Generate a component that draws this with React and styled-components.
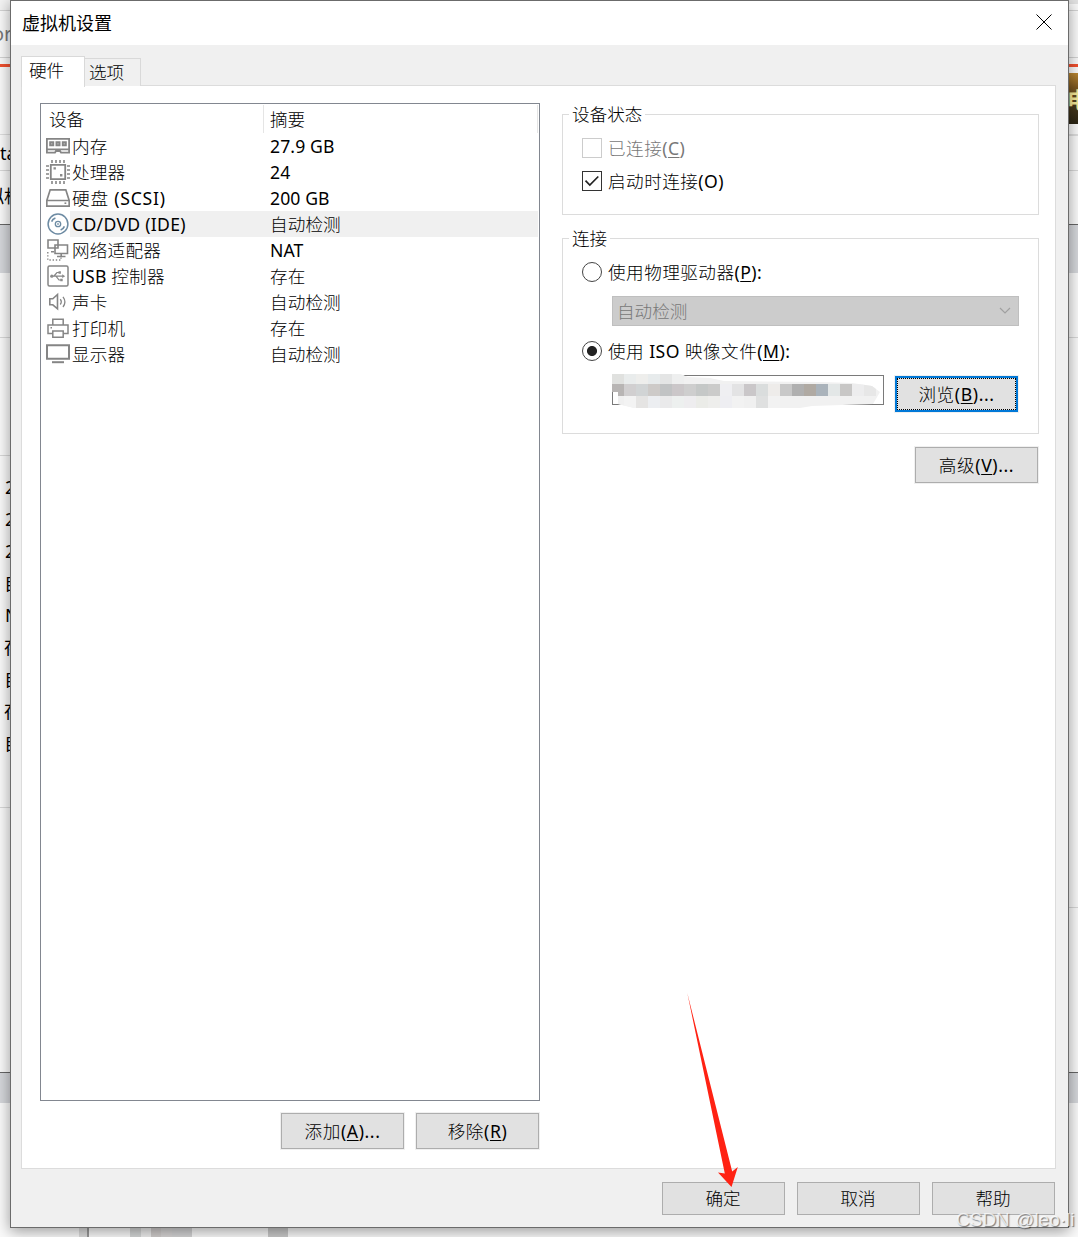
import React from "react";
import styled, { createGlobalStyle } from "styled-components";

const devices = [
  { icon: "memory", name: "内存", summary: "27.9 GB" },
  { icon: "cpu", name: "处理器", summary: "24" },
  { icon: "disk", name: "硬盘 (SCSI)", summary: "200 GB", spacing: 0.8 },
  { icon: "cd", name: "CD/DVD (IDE)", summary: "自动检测", spacing: 0.3, selected: true },
  { icon: "network", name: "网络适配器", summary: "NAT" },
  { icon: "usb", name: "USB 控制器", summary: "存在" },
  { icon: "sound", name: "声卡", summary: "自动检测" },
  { icon: "printer", name: "打印机", summary: "存在" },
  { icon: "display", name: "显示器", summary: "自动检测" }
];

// bands of the window behind the dialog, from top to bottom
const leftBands = [
  { h: 10, bg: "#f3f3f3" },
  { h: 1, bg: "#d3d3d3" },
  { h: 46, text: "or", size: 20, shift: -8, color: "#777" },
  { h: 1, bg: "#d3d3d3" },
  { h: 6 },
  { h: 3, bg: "#f0502f" },
  { h: 67 },
  { h: 1, bg: "#dedede" },
  { h: 35, text: "ta", shift: 0 },
  { h: 1, bg: "#d8d8d8" },
  { h: 50, text: "拟机", shift: -14 },
  { h: 3 },
  { h: 1, bg: "#666" },
  { h: 48, bg: "#d5d7db" },
  { h: 64 },
  { h: 1, bg: "#d8d8d8" },
  { h: 117 },
  { h: 1, bg: "#d8d8d8" },
  { h: 15 },
  { h: 32, text: "27.9 GB", shift: 5 },
  { h: 32, text: "24", shift: 5 },
  { h: 32, text: "200 GB", shift: 5 },
  { h: 32, text: "自动检测", shift: 4 },
  { h: 32, text: "NAT", shift: 5 },
  { h: 32, text: "存在", shift: 4 },
  { h: 32, text: "自动检测", shift: 4 },
  { h: 32, text: "存在", shift: 4 },
  { h: 32, text: "自动检测", shift: 4 },
  { h: 48 },
  { h: 1, bg: "#d8d8d8" },
  { h: 264 },
  { h: 1, bg: "#666" },
  { h: 30, bg: "#d5d7db" },
  { h: 125 }
];

const rightBands = [
  { h: 4, bg: "#e2e2e2" },
  { h: 6 },
  { h: 1, bg: "#d3d3d3" },
  { h: 46 },
  { h: 1, bg: "#d3d3d3" },
  { h: 6 },
  { h: 3, bg: "#f0502f" },
  { h: 6 },
  { h: 51, bg: "linear-gradient(#b98632, #7d5820 28%, #4a3a1c 60%, #2b2515)", text: "电", size: 22, shift: -2, color: "#f5e997", bold: true },
  { h: 10 },
  { h: 2, bg: "#dedede" },
  { h: 34 },
  { h: 1, bg: "#d8d8d8" },
  { h: 53 },
  { h: 1, bg: "#666" },
  { h: 48, bg: "#d5d7db" },
  { h: 64 },
  { h: 1, bg: "#d8d8d8" },
  { h: 569 },
  { h: 1, bg: "#d8d8d8" },
  { h: 164 },
  { h: 1, bg: "#666" },
  { h: 30, bg: "#d5d7db" },
  { h: 125 }
];

const bottomBlocks = [
  { w: 79, bg: "#fafafa" },
  { w: 8, bg: "#dcdcdc" },
  { w: 2, bg: "#999" },
  { w: 41, bg: "#fafafa" },
  { w: 11, bg: "#d4d6d6" },
  { w: 10, bg: "#eeeeee" },
  { w: 10, bg: "#cfcccb" },
  { w: 11, bg: "#d6d4d4" },
  { w: 20, bg: "#d3d3d4" },
  { w: 76, bg: "#fafafa" },
  { w: 20, bg: "#c9c9c9" }
];

const topRow = "#e0e1df #e9ecec #eeeeec #e7ebec #e4e5e5 #eeefef".split(" ");
const midRow = "#b8b5b4 #d1cfd0 #d1d4d5 #cdcac8 #c1c3c4 #cbc7c9 #cecece #c5c8c7 #cbcbca #efeff2 #e3e3e4 #cac7c9 #dadddd #eeecea #c8c8c8 #b0b0b0 #b0aaa3 #aab3bb #e3e7e7 #c8c7c6 #ededee #e7e7e7".split(" ");
const lowRow = "#f0f0f0 #f3f3f3 #e5e4e3 #eceef1 #eaeaeb #edf0ef #eeedef #ebece8 #eeeeec #eeeef2 #f2f2f2 #f0f0f0 #dfe0e0 #f2f2f2".split(" ");

function DeviceIcon({ type }) {
  return (
    <Icon viewBox="0 0 24 26">
      {type === "memory" && (
        <>
          <path d="M.9 5.9H23.1V19.6H15L14 18H10L9 19.6H.9Z M1 16.4H23" strokeWidth="1.8" />
          <path d="M4.1 9.2h3.2v3.2h-3.2zM10.4 9.2h3.2v3.2h-3.2zM16.7 9.2h3.2v3.2h-3.2z" fill="#aaa" strokeWidth="1.8" />
        </>
      )}
      {type === "cpu" && (
        <>
          <path d="M4.8 5.8H19.2V20.2H4.8Z" strokeWidth="1.8" />
          <path d="M6 1v3M10 1v3M14 1v3M18 1v3M6 22v3M10 22v3M14 22v3M18 22v3M0 7h3M0 11h3M0 15h3M0 19h3M21 7h3M21 11h3M21 15h3M21 19h3" strokeWidth="1.6" />
          <path d="M7.5 8.2h2.4v2.4H7.5zM14 15h2.4v2.4H14z" fill="#8b8b8b" stroke="none" />
        </>
      )}
      {type === "disk" && (
        <>
          <path d="M4.2 4.8H19.8L23.2 15.5V21.2H.8V15.5Z M.8 15.5H23.2" strokeWidth="1.7" />
          <path d="M18.5 18.2h1.8" strokeWidth="1.6" />
        </>
      )}
      {type === "cd" && (
        <g stroke="#6d8ba3">
          <circle cx="12" cy="13" r="9.9" strokeWidth="1.5" />
          <circle cx="12" cy="13" r="2.7" strokeWidth="1.3" />
          <circle cx="12" cy="13" r=".5" />
          <path d="M5.6 10.6Q6.6 8 9.4 7M18.4 15.4Q17.4 18 14.6 19" strokeWidth="1.6" />
        </g>
      )}
      {type === "network" && (
        <>
          <path d="M2 3H12V11H2ZM9 8H21.5V16.5H9Z" fill="#fff" strokeWidth="1.6" />
          <path d="M5 14.8H8M15.2 16.5V19M11 19.5H19.5" strokeWidth="1.6" />
          <path d="M1.8 15V23H15V19" strokeWidth="1.4" strokeDasharray="1.4 1.8" />
        </>
      )}
      {type === "usb" && (
        <>
          <rect x="2" y="3" width="20" height="20" rx="1.5" strokeWidth="1.5" />
          <path d="M5 13.2H17M8 13L11 9.5H13M10 13.2L13 17H15" strokeWidth="1.2" />
          <path d="M16.2 11.3L19.2 13.2L16.2 15.1ZM12.5 8.3h2.4v2.4h-2.4zM14.3 15.8h2.4v2.4h-2.4z" fill="#8b8b8b" stroke="none" />
          <circle cx="5.8" cy="13.2" r="1.6" fill="#8b8b8b" stroke="none" />
        </>
      )}
      {type === "sound" && (
        <>
          <path d="M3.8 9.8H6.8L11.5 5.5V19.8L6.8 15.8H3.8Z" strokeWidth="1.6" />
          <path d="M14.3 10.2Q16.3 12.8 14.3 15.5M17 7.8Q20.8 12.8 17 18" strokeWidth="1.3" />
        </>
      )}
      {type === "printer" && (
        <>
          <path d="M6.8 10V4.2H17.2V10M6.8 18.5H2V10H22V18.5H17.2M6.8 16H17.2V22.2H6.8Z" strokeWidth="1.5" />
          <path d="M4.5 12.8H6" strokeWidth="1.4" />
        </>
      )}
      {type === "display" && (
        <>
          <path d="M1 4.2H23V17.8H1Z" strokeWidth="2" />
          <path d="M6 21.2H18" strokeWidth="2" />
        </>
      )}
    </Icon>
  );
}

function Strip({ bands }) {
  return (
    <StripColumn>
      {bands.map((b, i) => (
        <Band key={i} $h={b.h} $bg={b.bg} $shift={b.shift} $color={b.color} $size={b.size} $bold={b.bold}>
          {b.text}
        </Band>
      ))}
    </StripColumn>
  );
}

function Redaction() {
  return (
    <Mosaic viewBox="0 0 272 34">
      <clipPath id="smudge">
        <path d="M0 0H68L76 3L98 4L112 7L210 8L240 9L260 12L268 18L261 30L200 32L188 34H22L14 32L6 30V18H0Z" />
      </clipPath>
      <g clipPath="url(#smudge)">
        <rect width="272" height="34" fill="#f1f1f1" />
        {topRow.map((c, i) => <rect key={i} x={i * 12} y="0" width="12" height="10" fill={c} />)}
        {midRow.map((c, i) => <rect key={i} x={i * 12} y="10" width="12" height="12" fill={c} />)}
        {lowRow.map((c, i) => <rect key={i} x={i * 12} y="22" width="12" height="12" fill={c} />)}
      </g>
    </Mosaic>
  );
}

function App() {
  return (
    <Screen>
      <GlobalStyle />
      <Strip bands={leftBands} />
      <Dialog>
        <TitleBar>
          <Title>虚拟机设置</Title>
          <CloseIcon viewBox="0 0 16 16">
            <path d="M.5 .5L15.5 15.5M15.5 .5L.5 15.5" />
          </CloseIcon>
        </TitleBar>
        <Tabs>
          <Tab $active>硬件</Tab>
          <Tab>选项</Tab>
        </Tabs>
        <Panel>
          <ListColumn>
            <DeviceList>
              <ListHeader>
                <HeaderCell>设备</HeaderCell>
                <HeaderCell>摘要</HeaderCell>
              </ListHeader>
              {devices.map((d) => (
                <DeviceRow key={d.icon}>
                  <DeviceIcon type={d.icon} />
                  <DeviceCells $selected={d.selected}>
                    <DeviceName $spacing={d.spacing}>{d.name}</DeviceName>
                    <Summary>{d.summary}</Summary>
                  </DeviceCells>
                </DeviceRow>
              ))}
            </DeviceList>
            <ListActions>
              <Button>添加(<u>A</u>)...</Button>
              <Button>移除(<u>R</u>)</Button>
            </ListActions>
          </ListColumn>
          <Settings>
            <Group $height={112}>
              <Legend>设备状态</Legend>
              <Option $top={13} $disabled>
                <CheckBox $disabled />
                <span>已连接(<u>C</u>)</span>
              </Option>
              <Option $top={13}>
                <CheckBox>
                  <svg width="18" height="18" viewBox="0 0 18 18">
                    <path d="M2.5 8.7L6.8 13L15.3 4.5" fill="none" stroke="#222" strokeWidth="1.7" />
                  </svg>
                </CheckBox>
                <span>启动时连接(O)</span>
              </Option>
            </Group>
            <Group $height={207} $top={12}>
              <Legend>连接</Legend>
              <Option $top={13}>
                <Radio />
                <span>使用物理驱动器(<u>P</u>):</span>
              </Option>
              <Select>
                自动检测
                <svg width="12" height="8" viewBox="0 0 12 8">
                  <path d="M1 1L6 6L11 1" fill="none" stroke="#a0a0a0" strokeWidth="1.2" />
                </svg>
              </Select>
              <Option $top={15}>
                <Radio $checked />
                <span>使用 ISO 映像文件(<u>M</u>):</span>
              </Option>
              <FileRow>
                <PathField>
                  <Redaction />
                </PathField>
                <Button $focused>浏览(<u>B</u>)...</Button>
              </FileRow>
            </Group>
            <Advanced>
              <Button>高级(<u>V</u>)...</Button>
            </Advanced>
          </Settings>
        </Panel>
        <Footer>
          <Button $short>确定</Button>
          <Button $short>取消</Button>
          <Button $short>帮助</Button>
        </Footer>
      </Dialog>
      <Strip bands={rightBands} />
      <BottomStrip>
        {bottomBlocks.map((b, i) => <Block key={i} $w={b.w} $bg={b.bg} />)}
      </BottomStrip>
      <Arrow viewBox="0 0 60 200">
        <path d="M7.3 3L52.2 181.5L57.8 177L51.5 197L38 182.5L44.8 183.5Z" fill="#ff2213" />
      </Arrow>
      <Watermark>CSDN @leo·li</Watermark>
    </Screen>
  );
}

const GlobalStyle = createGlobalStyle`
  * {
    box-sizing: border-box;
  }
  body {
    margin: 0;
    overflow: hidden;
    font-family: "Noto Sans", "Noto Sans CJK SC Light", "Noto Sans CJK SC", sans-serif;
    font-size: 17.6px;
    line-height: 26px;
    color: #000;
  }
  u {
    text-decoration-thickness: 1px;
    text-underline-offset: 2px;
  }
`;

const Screen = styled.div`
  position: relative;
  display: grid;
  grid-template-columns: 10px 1059px 9px;
  grid-template-rows: 1228px 9px;
  width: 1078px;
  height: 1237px;
  overflow: hidden;
  background-color: #fafafa;
`;

const StripColumn = styled.div`
  height: 1228px;
  overflow: hidden;
  font-family: "Noto Sans", "Noto Sans CJK SC", sans-serif;
`;

const Band = styled.div`
  display: flex;
  align-items: center;
  height: ${(p) => p.$h}px;
  overflow: hidden;
  white-space: nowrap;
  background: ${(p) => p.$bg || "#fafafa"};
  text-indent: ${(p) => p.$shift || 0}px;
  color: ${(p) => p.$color || "#000"};
  font-size: ${(p) => p.$size || 18}px;
  font-weight: ${(p) => (p.$bold ? 700 : 400)};
`;

const BottomStrip = styled.div`
  grid-column: 1 / 4;
  display: flex;
`;

const Block = styled.div`
  width: ${(p) => p.$w}px;
  background-color: ${(p) => p.$bg};
`;

const Dialog = styled.div`
  z-index: 1;
  display: flex;
  flex-direction: column;
  border: 1px solid #6b6b6b;
  background-color: #f0f0f0;
  box-shadow: 0 3px 14px rgba(0,0,0,0.4);
`;

const TitleBar = styled.div`
  display: flex;
  align-items: center;
  justify-content: space-between;
  height: 44px;
  padding: 0 16px 2px 11px;
  background-color: #fff;
`;

const Title = styled.span`
  font-family: "Noto Sans CJK SC", sans-serif;
  font-size: 18px;
`;

const CloseIcon = styled.svg`
  width: 16px;
  height: 16px;
  fill: none;
  stroke: #000;
  stroke-width: 1;
`;

const Tabs = styled.div`
  display: flex;
  align-items: flex-end;
  height: 41px;
  padding: 11px 10px 0;
`;

const Tab = styled.div`
  z-index: 1;
  height: ${(p) => (p.$active ? 31 : 28)}px;
  width: ${(p) => (p.$active ? 64 : 56)}px;
  margin-bottom: ${(p) => (p.$active ? -1 : 0)}px;
  padding-left: ${(p) => (p.$active ? 7 : 4)}px;
  border: 1px solid #d9d9d9;
  border-bottom: none;
  border-left-width: ${(p) => (p.$active ? 1 : 0)}px;
  background-color: ${(p) => (p.$active ? "#fff" : "#f0f0f0")};
  line-height: 26px;
`;

const Panel = styled.div`
  display: flex;
  gap: 22px;
  width: 1035px;
  height: 1084px;
  margin: -1px 0 0 10px;
  padding: 17px 16px 0 18px;
  border: 1px solid #dcdcdc;
  background-color: #fff;
`;

const ListColumn = styled.div`
  width: 500px;
`;

const DeviceList = styled.div`
  height: 998px;
  border: 1px solid #828790;
`;

const ListHeader = styled.div`
  display: grid;
  grid-template-columns: 223px 274px;
  height: 29px;
  padding-top: 1px;
`;

const HeaderCell = styled.div`
  height: 28px;
  padding-left: 8px;
  border-right: 1px solid #e5e5e5;
  line-height: 28px;

  & + & {
    padding-left: 6px;
  }
`;

const DeviceRow = styled.div`
  display: flex;
  height: 26px;
  padding: 0 1px 0 5px;
`;

const Icon = styled.svg`
  flex: none;
  width: 24px;
  height: 26px;
  fill: none;
  stroke: #858585;
`;

const DeviceCells = styled.div`
  flex: 1;
  display: grid;
  grid-template-columns: 198px 1fr;
  padding-left: 2px;
  background-color: ${(p) => (p.$selected ? "#f0f0f0" : "transparent")};
`;

const DeviceName = styled.span`
  letter-spacing: ${(p) => p.$spacing || 0.2}px;
`;

const Summary = styled.span`
  letter-spacing: 0.1px;
`;

const ListActions = styled.div`
  display: flex;
  justify-content: flex-end;
  gap: 12px;
  margin: 12px 1px 0 0;
`;

const Button = styled.button`
  width: 123px;
  height: ${(p) => (p.$short ? 33 : 36)}px;
  padding: ${(p) => (p.$short ? "0 1px 2px 0" : 0)};
  border: ${(p) => (p.$focused ? "2px solid #0078d7" : "1px solid #adadad")};
  outline: ${(p) => (p.$focused ? "1px dotted #000" : "none")};
  outline-offset: -3px;
  background-color: #e1e1e1;
  box-shadow: 0 0 0 1px #f0f0f0;
  font: inherit;
  letter-spacing: ${(p) => (p.$short ? 0 : 0.6)}px;
  color: #000;
`;

const Settings = styled.div`
  width: 477px;
`;

const Group = styled.fieldset`
  height: ${(p) => p.$height}px;
  margin: ${(p) => p.$top || 0}px 0 0;
  padding: 0 19px;
  border: 1px solid #dcdcdc;
`;

const Legend = styled.legend`
  height: 22px;
  margin-left: -13px;
  padding: 0 3px;
  line-height: 22px;
`;

const Option = styled.label`
  display: flex;
  align-items: center;
  gap: 6px;
  height: 20px;
  margin-top: ${(p) => p.$top}px;
  letter-spacing: 0.47px;
  color: ${(p) => (p.$disabled ? "#787878" : "#000")};
`;

const CheckBox = styled.span`
  display: flex;
  width: 20px;
  height: 20px;
  border: 1px solid ${(p) => (p.$disabled ? "#cccccc" : "#333")};
  background-color: #fff;
`;

const Radio = styled.span`
  width: 20px;
  height: 20px;
  border: 1px solid #444;
  border-radius: 50%;
  background: ${(p) => (p.$checked ? "radial-gradient(circle, #222 4.6px, #fff 5.4px)" : "#fff")};
`;

const Select = styled.div`
  display: flex;
  align-items: center;
  justify-content: space-between;
  width: 407px;
  height: 30px;
  margin: 14px 0 0 30px;
  padding: 0 7px 0 4px;
  border: 1px solid #bfbfbf;
  background-color: #ccc;
  color: #787878;
`;

const FileRow = styled.div`
  display: flex;
  gap: 11px;
  margin: 14px 0 0 30px;
`;

const PathField = styled.div`
  width: 272px;
  height: 30px;
  border: 1px solid #7a7a7a;

  & + button {
    margin-top: 1px;
  }
`;

const Mosaic = styled.svg`
  display: block;
  width: 272px;
  height: 34px;
  margin: -2px 0 0 -1px;
`;

const Advanced = styled.div`
  display: flex;
  justify-content: flex-end;
  margin: 13px 1px 0 0;
`;

const Footer = styled.div`
  display: flex;
  justify-content: flex-end;
  gap: 12px;
  padding: 13px 13px 0;
`;

const Arrow = styled.svg`
  position: absolute;
  z-index: 2;
  top: 990px;
  left: 680px;
  width: 60px;
  height: 200px;
`;

const Watermark = styled.span`
  position: absolute;
  z-index: 2;
  top: 1207px;
  left: 956px;
  white-space: nowrap;
  font-family: "Liberation Sans", sans-serif;
  font-size: 19px;
  color: rgba(255,255,255,0.75);
  text-shadow: 1px 1px 1px rgba(0,0,0,0.5);
`;

export default App;
